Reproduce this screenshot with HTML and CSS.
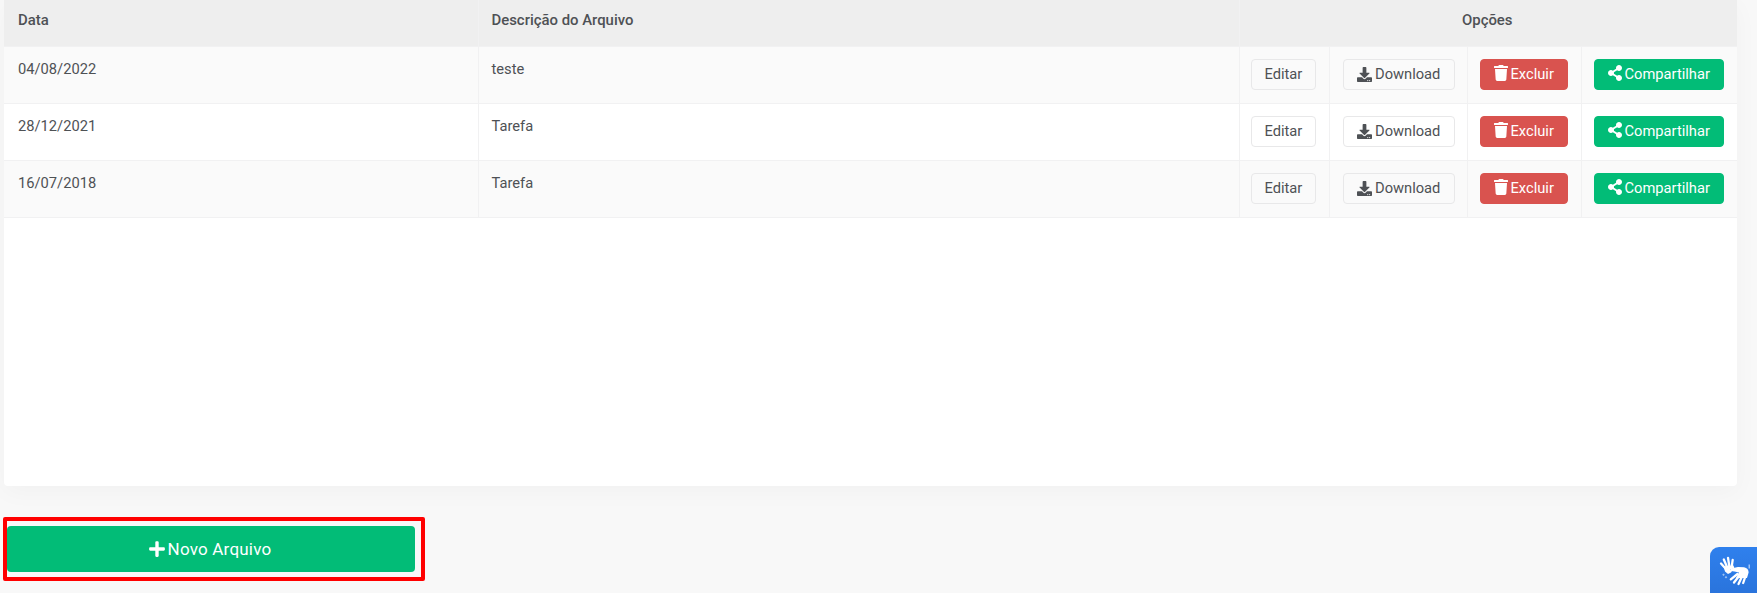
FILE: index.html
```html
<!DOCTYPE html>
<html lang="pt-BR">
<head>
<meta charset="utf-8">
<title>Arquivos</title>
<link rel="stylesheet" href="styles.css">
</head>
<body>
<svg class="sprites" aria-hidden="true">
  <symbol id="i-download" viewBox="0 0 512 512"><path d="M216 0h80c13.300 0 24 10.700 24 24v168h87.700c17.800 0 26.700 21.500 14.100 34.100L269.700 378.300c-7.500 7.500-19.800 7.500-27.300 0L90.100 226.100c-12.600-12.600-3.700-34.100 14.100-34.100H192V24c0-13.300 10.700-24 24-24zm296 376v112c0 13.300-10.700 24-24 24H24c-13.300 0-24-10.700-24-24V376c0-13.300 10.700-24 24-24h146.700l49 49c20.100 20.100 52.500 20.100 72.600 0l49-49H488c13.300 0 24 10.700 24 24zm-124 88c0-11-9-20-20-20s-20 9-20 20 9 20 20 20 20-9 20-20zm64 0c0-11-9-20-20-20s-20 9-20 20 9 20 20 20 20-9 20-20z"/></symbol>
  <symbol id="i-trash" viewBox="0 0 448 512"><path d="M432 32H312l-9.400-18.700A24 24 0 0 0 281.100 0H166.800a23.720 23.720 0 0 0-21.400 13.300L136 32H16A16 16 0 0 0 0 48v32a16 16 0 0 0 16 16h416a16 16 0 0 0 16-16V48a16 16 0 0 0-16-16zM53.200 467a48 48 0 0 0 47.900 45h245.800a48 48 0 0 0 47.900-45L416 128H32z"/></symbol>
  <symbol id="i-share" viewBox="0 0 448 512"><path d="M352 320c-22.608 0-43.387 7.819-59.790 20.895l-102.486-64.054a96.551 96.551 0 0 0 0-41.683l102.486-64.054C308.613 184.181 329.392 192 352 192c53.019 0 96-42.981 96-96S405.019 0 352 0s-96 42.981-96 96c0 7.158.79 14.130 2.276 20.841L155.790 180.895C139.387 167.819 118.608 160 96 160c-53.019 0-96 42.981-96 96s42.981 96 96 96c22.608 0 43.387-7.819 59.790-20.895l102.486 64.054A96.301 96.301 0 0 0 256 416c0 53.019 42.981 96 96 96s96-42.981 96-96-42.981-96-96-96z"/></symbol>
  <symbol id="i-plus" viewBox="0 0 448 512"><path d="M416 208H272V64c0-17.670-14.330-32-32-32h-32c-17.670 0-32 14.330-32 32v144H32c-17.670 0-32 14.330-32 32v32c0 17.670 14.330 32 32 32h144v144c0 17.670 14.330 32 32 32h32c17.670 0 32-14.330 32-32V304h144c17.670 0 32-14.330 32-32v-32c0-17.670-14.330-32-32-32z"/></symbol>
</svg>

<main class="page">
  <section class="card">
    <table class="files">
      <colgroup>
        <col class="col-date"><col class="col-desc"><col class="col-edit"><col class="col-down"><col class="col-del"><col class="col-share">
      </colgroup>
      <thead>
        <tr><th>Data</th><th>Descrição do Arquivo</th><th colspan="4" class="center">Opções</th></tr>
      </thead>
      <tbody>
        <tr>
          <td>04/08/2022</td><td>teste</td>
          <td class="cell-btn"><a class="btn btn-edit">Editar</a></td>
          <td class="cell-btn"><a class="btn btn-down"><svg class="ic ic-dl"><use href="#i-download"/></svg>Download</a></td>
          <td class="cell-btn"><a class="btn btn-red"><svg class="ic ic-tr"><use href="#i-trash"/></svg>Excluir</a></td>
          <td class="cell-btn"><a class="btn btn-green"><svg class="ic ic-sh"><use href="#i-share"/></svg>Compartilhar</a></td>
        </tr>
        <tr>
          <td>28/12/2021</td><td>Tarefa</td>
          <td class="cell-btn"><a class="btn btn-edit">Editar</a></td>
          <td class="cell-btn"><a class="btn btn-down"><svg class="ic ic-dl"><use href="#i-download"/></svg>Download</a></td>
          <td class="cell-btn"><a class="btn btn-red"><svg class="ic ic-tr"><use href="#i-trash"/></svg>Excluir</a></td>
          <td class="cell-btn"><a class="btn btn-green"><svg class="ic ic-sh"><use href="#i-share"/></svg>Compartilhar</a></td>
        </tr>
        <tr>
          <td>16/07/2018</td><td>Tarefa</td>
          <td class="cell-btn"><a class="btn btn-edit">Editar</a></td>
          <td class="cell-btn"><a class="btn btn-down"><svg class="ic ic-dl"><use href="#i-download"/></svg>Download</a></td>
          <td class="cell-btn"><a class="btn btn-red"><svg class="ic ic-tr"><use href="#i-trash"/></svg>Excluir</a></td>
          <td class="cell-btn"><a class="btn btn-green"><svg class="ic ic-sh"><use href="#i-share"/></svg>Compartilhar</a></td>
        </tr>
      </tbody>
    </table>
  </section>

  <div class="highlight">
    <a class="btn-new"><svg class="ic ic-plus"><use href="#i-plus"/></svg>Novo Arquivo</a>
  </div>
</main>

<div class="vlibras" aria-label="VLibras">
  <svg viewBox="0 0 47 46" class="vlibras-hand">
    <g class="hand-fingers">
      <path d="M16 22L11 16.500M17.500 21L13.800 12.500M19.500 20.500L18 10.800M21.500 21L22.700 12.800"/>
    </g>
    <path class="hand-solid" d="M13.500 19.500L23.500 18.500L24.500 21.500L21 25.500L18 27L15 24.500z"/>
    <path class="hand-cut" d="M20.500 22.500L28 19.500L37 20L40 25L37 31L27 32z"/>
    <path class="hand-solid" d="M21 21.500L28 20L34 20.300C37 20.800 38.800 23 38.600 25.500L37 31L26 31L29 25.500L24.500 24.500L21 24z"/>
    <g class="hand-fingers">
      <path d="M27.500 27L20.800 32.300M29.500 28.500L24 35.500M32 29.500L28.500 37M35.500 29L33.200 36"/>
    </g>
    <path class="hand-faint" d="M38.500 17.500h1.500v4h-1.500zM13.500 26.500l1.300 1.300-1.300 1.300-1.300-1.300zM16 29l1.300 1.300-1.300 1.300-1.300-1.300z"/>
  </svg>
</div>
</body>
</html>
```
FILE: styles.css
```css
* { box-sizing: border-box; }

html, body { height: 100%; }

body {
  margin: 0;
  background: #f8f8f8;
  color: #4e5155;
  font-family: Roboto, "Liberation Sans", sans-serif;
  font-size: 14.7px;
  line-height: 21px;
  overflow: hidden;
}

.sprites { display: none; }

.page {
  display: flex;
  flex-direction: column;
  align-items: flex-start;
  padding-left: 4px;
  padding-right: 20px;
}

.card {
  width: 100%;
  height: 486px;
  background: #fff;
  border-radius: 0 0 4px 4px;
  box-shadow: 0 6px 24px rgba(0, 0, 0, .03);
}

.files {
  width: 1733px;
  table-layout: fixed;
  border-collapse: collapse;
}

.col-date { width: 474px; }
.col-desc { width: 761px; }
.col-edit { width: 90px; }
.col-down { width: 138px; }
.col-del { width: 114px; }
.col-share { width: 156px; }

.files th,
.files td {
  padding: 12px 13px 0;
  text-align: left;
  vertical-align: top;
  border-bottom: 1px solid #f1f1f2;
  border-left: 1px solid #f1f1f2;
}

.files th:first-child,
.files td:first-child { border-left: 0; padding-left: 14px; }

.files th {
  height: 46px;
  background: #eee;
  font-weight: 500;
  font-size: 14.9px;
  padding-top: 10px;
}

.files th.center { text-align: center; padding-right: 15px; }

.files td { height: 57px; }

.files .cell-btn { padding-left: 12px; padding-right: 10px; }

.files tbody tr:nth-child(odd) { background: #fafafa; }

.btn {
  display: inline-flex;
  align-items: center;
  height: 31.5px;
  padding: 0 13px;
  border: 1px solid #e8e8e9;
  border-radius: 4px;
  color: #4e5155;
  white-space: nowrap;
}

.btn-edit { margin-left: -1px; }
.btn-down { margin-left: 1px; padding: 0 13.5px; }
.btn-red { background: #d9534f; border-color: #d9534f; color: #fff; }
.btn-green { background: #02bc77; border-color: #02bc77; color: #fff; }

.ic { display: block; flex: none; fill: currentColor; margin-right: 3px; }
.ic-dl { width: 15px; height: 15px; }
.ic-tr { width: 14px; height: 16px; margin-top: -2px; }
.ic-sh { width: 14px; height: 16px; margin-top: -2px; }
.ic-plus { width: 16px; height: 18px; margin-right: 3px; }

.highlight {
  margin-top: 31px;
  width: 422px;
  height: 64px;
  margin-left: -1px;
  padding: 5px 6px 5px 0;
  border: 4px solid #f00;
  border-radius: 2px;
}

.btn-new {
  display: flex;
  align-items: center;
  justify-content: center;
  height: 46px;
  padding-right: 2px;
  background: #02bc77;
  border-radius: 4px;
  color: #fff;
  font-size: 17px;
  font-weight: 400;
  letter-spacing: .2px;
}

.vlibras {
  position: fixed;
  right: 0;
  bottom: 0;
  width: 47px;
  height: 46px;
  background: linear-gradient(180deg, #2f80ed, #2a74dc);
  border-radius: 9px 0 0 0;
}

.vlibras-hand { display: block; width: 47px; height: 46px; }

.hand-fingers path { fill: none; stroke: #fff; stroke-width: 2.3; stroke-linecap: round; }
.hand-solid { fill: #fff; }
.hand-cut { fill: #2e7fea; }
.hand-faint { fill: #fff; opacity: .55; }
```
